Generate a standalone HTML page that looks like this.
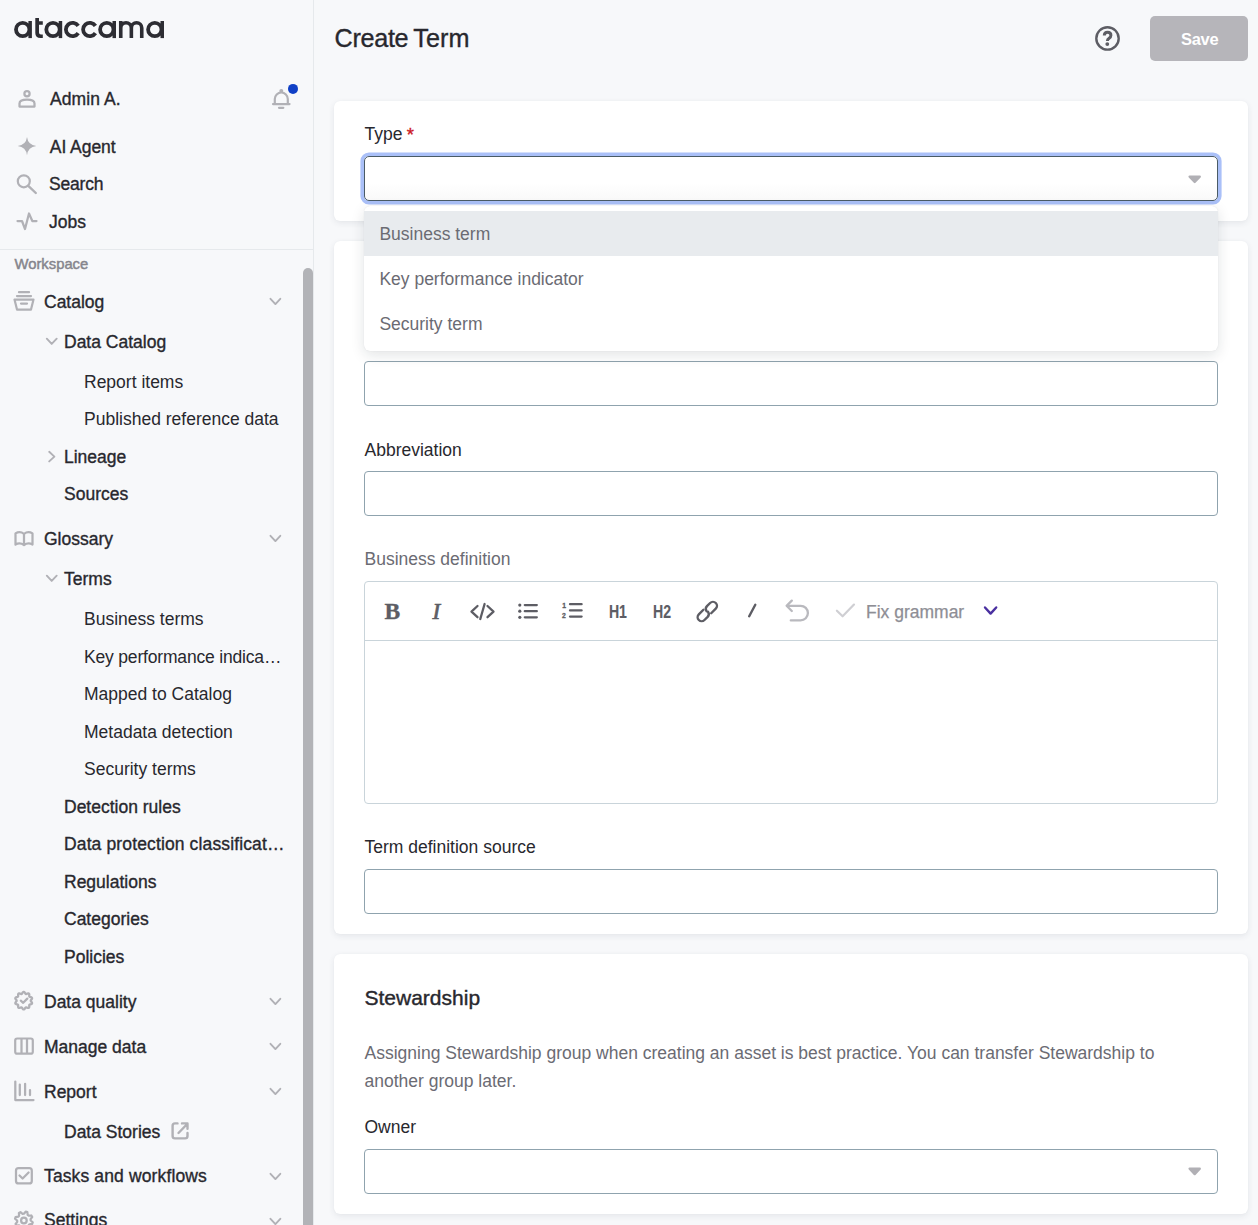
<!DOCTYPE html>
<html><head><meta charset="utf-8"><title>Create Term</title>
<style>
html,body{margin:0;padding:0;}
body{width:1258px;height:1225px;overflow:hidden;position:relative;background:#f7f8fa;font-family:"Liberation Sans",sans-serif;}
.t{position:absolute;white-space:nowrap;}
</style></head><body>
<div style="position:absolute;left:313px;top:0px;width:1px;height:1225px;background:#e6e9ec"></div>
<div style="position:absolute;left:0px;top:249px;width:313px;height:1px;background:#e6e9ec"></div>
<div style="position:absolute;left:303px;top:268px;width:10px;height:1000px;background:#b2b3b7;border-radius:5px"></div>
<svg style="position:absolute;left:0px;top:0px" width="200" height="60" viewBox="0 0 200 60" fill="none"><circle cx="22.70" cy="29.5" r="6.7" stroke="#2d2d33" stroke-width="3.8"/><rect x="28.40" y="21" width="3.5" height="17.1" fill="#2d2d33"/><path d="M35.3,18 H39 V21.2 H42.8 V24.8 H39 V32.6 Q39,34.5 41,34.5 H42.8 V38.1 H40.6 Q35.3,38.1 35.3,33 Z" fill="#2d2d33"/><circle cx="53.00" cy="29.5" r="6.7" stroke="#2d2d33" stroke-width="3.8"/><rect x="58.70" y="21" width="3.5" height="17.1" fill="#2d2d33"/><path d="M78.22,25.85 A6.70,6.70 0 1 0 78.22,33.15" stroke="#2d2d33" stroke-width="3.8"/><path d="M95.42,25.85 A6.70,6.70 0 1 0 95.42,33.15" stroke="#2d2d33" stroke-width="3.8"/><circle cx="106.80" cy="29.5" r="6.7" stroke="#2d2d33" stroke-width="3.8"/><rect x="112.50" y="21" width="3.5" height="17.1" fill="#2d2d33"/><path d="M120.75,21 V38.1 M120.75,28 A5.3,5.3 0 0 1 131.35,28 V38.1 M131.35,28 A5.2,5.2 0 0 1 141.75,28 V38.1" stroke="#2d2d33" stroke-width="3.6"/><circle cx="154.80" cy="29.5" r="6.7" stroke="#2d2d33" stroke-width="3.8"/><rect x="160.50" y="21" width="3.5" height="17.1" fill="#2d2d33"/></svg>
<svg style="position:absolute;left:0px;top:0px" width="313" height="1225" viewBox="0 0 313 1225" fill="none"><circle cx="27" cy="93.7" r="2.6" stroke="#b1b1b6" stroke-width="2.25"/><path d="M19.5,106.5 V103.5 Q19.5,99.6 27,99.6 Q34.5,99.6 34.5,103.5 V106.5 Z" stroke="#b1b1b6" stroke-width="2.25" stroke-linejoin="round"/><path d="M274.8,104 V99 A6.5,6.5 0 0 1 287.8,99 V104" stroke="#b1b1b6" stroke-width="2.2"/><path d="M273,104 H289.5" stroke="#b1b1b6" stroke-width="2.25" stroke-linecap="round"/><circle cx="281.3" cy="91" r="2" fill="#b1b1b6"/><path d="M279,107.8 H283.3" stroke="#b1b1b6" stroke-width="2.25" stroke-linecap="round"/><circle cx="293" cy="88.9" r="5" fill="#1040c6"/><path d="M27,137 Q28,145 36.3,146 Q28,147 27,155.2 Q26,147 17.7,146 Q26,145 27,137 Z" fill="#b1b1b6"/><circle cx="23.8" cy="181.3" r="6" stroke="#b1b1b6" stroke-width="2.2"/><path d="M28.3,185.8 L35.8,193" stroke="#b1b1b6" stroke-width="2.4" stroke-linecap="round"/><path d="M17.5,221 H22 L25,229 L29,213.5 L32.3,221 H36.5" stroke="#b1b1b6" stroke-width="2.25" stroke-linejoin="round" stroke-linecap="round"/><path d="M19,292.2 H29 M17,296 H31" stroke="#b1b1b6" stroke-width="2.25" stroke-linecap="round"/><path d="M14.5,299.6 H33.5 L31,309.6 H17 Z" stroke="#b1b1b6" stroke-width="2.2" stroke-linejoin="round"/><path d="M21,303.5 H27" stroke="#b1b1b6" stroke-width="2.25" stroke-linecap="round"/><path d="M15.5,533.5 Q19.7,530.8 24,533.8 Q28.3,530.8 32.5,533.5 V544.6 Q28.3,542 24,545 Q19.7,542 15.5,544.6 Z M24,533.8 V545" stroke="#b1b1b6" stroke-width="2.25" stroke-linejoin="round"/><path d="M23.70,991.95 L23.97,992.00 L24.24,992.13 L24.49,992.34 L24.72,992.60 L24.94,992.90 L25.13,993.20 L25.31,993.48 L25.49,993.71 L25.68,993.89 L25.88,994.00 L26.10,994.03 L26.36,993.99 L26.64,993.91 L26.95,993.79 L27.29,993.66 L27.63,993.55 L27.98,993.47 L28.30,993.45 L28.59,993.50 L28.84,993.62 L29.04,993.82 L29.17,994.08 L29.25,994.40 L29.29,994.75 L29.29,995.11 L29.27,995.47 L29.25,995.81 L29.26,996.10 L29.30,996.35 L29.40,996.56 L29.57,996.71 L29.79,996.84 L30.07,996.93 L30.39,997.02 L30.74,997.11 L31.09,997.22 L31.41,997.36 L31.68,997.54 L31.89,997.75 L32.02,998.00 L32.06,998.27 L32.02,998.56 L31.90,998.87 L31.72,999.17 L31.50,999.46 L31.28,999.74 L31.07,1000.00 L30.90,1000.25 L30.79,1000.48 L30.75,1000.70 L30.79,1000.92 L30.90,1001.15 L31.07,1001.40 L31.28,1001.66 L31.50,1001.94 L31.72,1002.23 L31.90,1002.53 L32.02,1002.84 L32.06,1003.13 L32.02,1003.40 L31.89,1003.65 L31.68,1003.86 L31.41,1004.04 L31.09,1004.18 L30.74,1004.29 L30.39,1004.38 L30.07,1004.47 L29.79,1004.56 L29.57,1004.69 L29.40,1004.84 L29.30,1005.05 L29.26,1005.30 L29.25,1005.59 L29.27,1005.93 L29.29,1006.29 L29.29,1006.65 L29.25,1007.00 L29.17,1007.32 L29.04,1007.58 L28.84,1007.78 L28.59,1007.90 L28.30,1007.95 L27.98,1007.93 L27.63,1007.85 L27.29,1007.74 L26.95,1007.61 L26.64,1007.49 L26.36,1007.41 L26.10,1007.37 L25.88,1007.40 L25.68,1007.51 L25.49,1007.69 L25.31,1007.92 L25.13,1008.20 L24.94,1008.50 L24.72,1008.80 L24.49,1009.06 L24.24,1009.27 L23.97,1009.40 L23.70,1009.45 L23.43,1009.40 L23.16,1009.27 L22.91,1009.06 L22.68,1008.80 L22.46,1008.50 L22.27,1008.20 L22.09,1007.92 L21.91,1007.69 L21.72,1007.51 L21.52,1007.40 L21.30,1007.37 L21.04,1007.41 L20.76,1007.49 L20.45,1007.61 L20.11,1007.74 L19.77,1007.85 L19.42,1007.93 L19.10,1007.95 L18.81,1007.90 L18.56,1007.78 L18.36,1007.58 L18.23,1007.32 L18.15,1007.00 L18.11,1006.65 L18.11,1006.29 L18.13,1005.93 L18.15,1005.59 L18.14,1005.30 L18.10,1005.05 L18.00,1004.84 L17.83,1004.69 L17.61,1004.56 L17.33,1004.47 L17.01,1004.38 L16.66,1004.29 L16.31,1004.18 L15.99,1004.04 L15.72,1003.86 L15.51,1003.65 L15.38,1003.40 L15.34,1003.13 L15.38,1002.84 L15.50,1002.53 L15.68,1002.23 L15.90,1001.94 L16.12,1001.66 L16.33,1001.40 L16.50,1001.15 L16.61,1000.92 L16.65,1000.70 L16.61,1000.48 L16.50,1000.25 L16.33,1000.00 L16.12,999.74 L15.90,999.46 L15.68,999.17 L15.50,998.87 L15.38,998.56 L15.34,998.27 L15.38,998.00 L15.51,997.75 L15.72,997.54 L15.99,997.36 L16.31,997.22 L16.66,997.11 L17.01,997.02 L17.33,996.93 L17.61,996.84 L17.83,996.71 L18.00,996.56 L18.10,996.35 L18.14,996.10 L18.15,995.81 L18.13,995.47 L18.11,995.11 L18.11,994.75 L18.15,994.40 L18.23,994.08 L18.36,993.82 L18.56,993.62 L18.81,993.50 L19.10,993.45 L19.42,993.47 L19.77,993.55 L20.11,993.66 L20.45,993.79 L20.76,993.91 L21.04,993.99 L21.30,994.03 L21.52,994.00 L21.72,993.89 L21.91,993.71 L22.09,993.48 L22.27,993.20 L22.46,992.90 L22.68,992.60 L22.91,992.34 L23.16,992.13 L23.43,992.00 Z" stroke="#b1b1b6" stroke-width="2.3" stroke-linejoin="round"/><path d="M20.8,1000.7 L23.2,1002.8 L27.3,998.6" stroke="#b1b1b6" stroke-width="2.25" stroke-linecap="round" stroke-linejoin="round"/><rect x="15.2" y="1038.5" width="17.6" height="15.2" rx="2" stroke="#b1b1b6" stroke-width="2.2"/><path d="M21.5,1038.5 V1053.7 M27,1038.5 V1053.7" stroke="#b1b1b6" stroke-width="2.25"/><path d="M15.3,1081.5 V1100 H33.5" stroke="#b1b1b6" stroke-width="2.25" stroke-linecap="round" stroke-linejoin="round"/><path d="M19.8,1084.5 V1095 M25.1,1083.8 V1095 M30,1090 V1095" stroke="#b1b1b6" stroke-width="2.25" stroke-linecap="round"/><rect x="16" y="1168.2" width="15.8" height="15.2" rx="2.5" stroke="#b1b1b6" stroke-width="2.25"/><path d="M19.5,1175.5 L22.6,1178.5 L28.6,1172.5" stroke="#b1b1b6" stroke-width="2.25" stroke-linecap="round" stroke-linejoin="round"/><path d="M32.73,1222.26 L32.21,1223.94 L29.55,1224.28 L28.71,1225.31 L28.90,1227.98 L27.34,1228.81 L25.23,1227.17 L23.90,1227.30 L22.14,1229.33 L20.46,1228.81 L20.12,1226.15 L19.09,1225.31 L16.42,1225.50 L15.59,1223.94 L17.23,1221.83 L17.10,1220.50 L15.07,1218.74 L15.59,1217.06 L18.25,1216.72 L19.09,1215.69 L18.90,1213.02 L20.46,1212.19 L22.57,1213.83 L23.90,1213.70 L25.66,1211.67 L27.34,1212.19 L27.68,1214.85 L28.71,1215.69 L31.38,1215.50 L32.21,1217.06 L30.57,1219.17 L30.70,1220.50 Z" stroke="#b1b1b6" stroke-width="2.25" stroke-linejoin="round"/><circle cx="23.9" cy="1220.5" r="2.8" stroke="#b1b1b6" stroke-width="2.25"/><path d="M177.5,1123.4 H175 Q172.6,1123.4 172.6,1125.8 V1136 Q172.6,1138.4 175,1138.4 H185.1 Q187.5,1138.4 187.5,1136 V1133" stroke="#b1b1b6" stroke-width="2.4" stroke-linecap="round"/><path d="M178.5,1133 L187.2,1124 M182,1123.4 H187.5 V1128.8" stroke="#b1b1b6" stroke-width="2.4" stroke-linecap="round" stroke-linejoin="round"/><path d="M270.5,298.8 L275.4,304.1 L280.3,298.8" stroke="#b1b1b6" stroke-width="1.9" stroke-linecap="round" stroke-linejoin="round"/><path d="M270.5,535.8 L275.4,541.1 L280.3,535.8" stroke="#b1b1b6" stroke-width="1.9" stroke-linecap="round" stroke-linejoin="round"/><path d="M270.5,998.8 L275.4,1004.1 L280.3,998.8" stroke="#b1b1b6" stroke-width="1.9" stroke-linecap="round" stroke-linejoin="round"/><path d="M270.5,1043.8 L275.4,1049.1 L280.3,1043.8" stroke="#b1b1b6" stroke-width="1.9" stroke-linecap="round" stroke-linejoin="round"/><path d="M270.5,1088.8 L275.4,1094.1 L280.3,1088.8" stroke="#b1b1b6" stroke-width="1.9" stroke-linecap="round" stroke-linejoin="round"/><path d="M270.5,1173.8 L275.4,1179.1 L280.3,1173.8" stroke="#b1b1b6" stroke-width="1.9" stroke-linecap="round" stroke-linejoin="round"/><path d="M270.5,1218.8 L275.4,1224.1 L280.3,1218.8" stroke="#b1b1b6" stroke-width="1.9" stroke-linecap="round" stroke-linejoin="round"/><path d="M46.8,338.7 L51.7,343.9 L56.7,338.7" stroke="#b1b1b6" stroke-width="1.9" stroke-linecap="round" stroke-linejoin="round"/><path d="M46.8,575.7 L51.7,580.9 L56.7,575.7" stroke="#b1b1b6" stroke-width="1.9" stroke-linecap="round" stroke-linejoin="round"/><path d="M49.2,451.8 L54.4,456.6 L49.2,461.4" stroke="#b1b1b6" stroke-width="1.9" stroke-linecap="round" stroke-linejoin="round"/></svg>
<div class="t" style="left:50.00px;top:89.04px;font-size:17.5px;line-height:21px;color:#28282e;font-weight:400;-webkit-text-stroke:0.35px #28282e;letter-spacing:0.1px;">Admin A.</div>
<div class="t" style="left:49.80px;top:136.74px;font-size:17.5px;line-height:21px;color:#28282e;font-weight:400;-webkit-text-stroke:0.35px #28282e;letter-spacing:-0.05px;">AI Agent</div>
<div class="t" style="left:49.00px;top:173.64px;font-size:17.5px;line-height:21px;color:#28282e;font-weight:400;-webkit-text-stroke:0.35px #28282e;letter-spacing:-0.2px;">Search</div>
<div class="t" style="left:49.00px;top:211.74px;font-size:17.5px;line-height:21px;color:#28282e;font-weight:400;-webkit-text-stroke:0.35px #28282e;">Jobs</div>
<div class="t" style="left:14.50px;top:255.07px;font-size:14.8px;line-height:18px;color:#85858c;font-weight:400;-webkit-text-stroke:0.35px #85858c;-webkit-text-stroke:0.45px #85858c;">Workspace</div>
<div class="t" style="left:44.00px;top:292.44px;font-size:17.5px;line-height:21px;color:#28282e;font-weight:400;-webkit-text-stroke:0.35px #28282e;">Catalog</div>
<div class="t" style="left:64.00px;top:332.34px;font-size:17.5px;line-height:21px;color:#28282e;font-weight:400;-webkit-text-stroke:0.35px #28282e;">Data Catalog</div>
<div class="t" style="left:84.00px;top:371.84px;font-size:17.5px;line-height:21px;color:#28282e;font-weight:400;">Report items</div>
<div class="t" style="left:84.00px;top:408.74px;font-size:17.5px;line-height:21px;color:#28282e;font-weight:400;">Published reference data</div>
<div class="t" style="left:64.00px;top:446.84px;font-size:17.5px;line-height:21px;color:#28282e;font-weight:400;-webkit-text-stroke:0.35px #28282e;">Lineage</div>
<div class="t" style="left:64.00px;top:483.74px;font-size:17.5px;line-height:21px;color:#28282e;font-weight:400;-webkit-text-stroke:0.35px #28282e;">Sources</div>
<div class="t" style="left:44.00px;top:528.64px;font-size:17.5px;line-height:21px;color:#28282e;font-weight:400;-webkit-text-stroke:0.35px #28282e;">Glossary</div>
<div class="t" style="left:64.00px;top:569.24px;font-size:17.5px;line-height:21px;color:#28282e;font-weight:400;-webkit-text-stroke:0.35px #28282e;">Terms</div>
<div class="t" style="left:84.00px;top:608.74px;font-size:17.5px;line-height:21px;color:#28282e;font-weight:400;">Business terms</div>
<div class="t" style="left:84.00px;top:646.94px;font-size:17.5px;line-height:21px;color:#28282e;font-weight:400;letter-spacing:-0.18px;">Key performance indica…</div>
<div class="t" style="left:84.00px;top:683.84px;font-size:17.5px;line-height:21px;color:#28282e;font-weight:400;">Mapped to Catalog</div>
<div class="t" style="left:84.00px;top:721.94px;font-size:17.5px;line-height:21px;color:#28282e;font-weight:400;">Metadata detection</div>
<div class="t" style="left:84.00px;top:758.84px;font-size:17.5px;line-height:21px;color:#28282e;font-weight:400;">Security terms</div>
<div class="t" style="left:64.00px;top:796.84px;font-size:17.5px;line-height:21px;color:#28282e;font-weight:400;-webkit-text-stroke:0.35px #28282e;">Detection rules</div>
<div class="t" style="left:64.00px;top:834.24px;font-size:17.5px;line-height:21px;color:#28282e;font-weight:400;-webkit-text-stroke:0.35px #28282e;letter-spacing:0.13px;">Data protection classificat…</div>
<div class="t" style="left:64.00px;top:872.34px;font-size:17.5px;line-height:21px;color:#28282e;font-weight:400;-webkit-text-stroke:0.35px #28282e;">Regulations</div>
<div class="t" style="left:64.00px;top:909.24px;font-size:17.5px;line-height:21px;color:#28282e;font-weight:400;-webkit-text-stroke:0.35px #28282e;">Categories</div>
<div class="t" style="left:64.00px;top:946.94px;font-size:17.5px;line-height:21px;color:#28282e;font-weight:400;-webkit-text-stroke:0.35px #28282e;">Policies</div>
<div class="t" style="left:44.00px;top:991.94px;font-size:17.5px;line-height:21px;color:#28282e;font-weight:400;-webkit-text-stroke:0.35px #28282e;">Data quality</div>
<div class="t" style="left:44.00px;top:1037.04px;font-size:17.5px;line-height:21px;color:#28282e;font-weight:400;-webkit-text-stroke:0.35px #28282e;">Manage data</div>
<div class="t" style="left:44.00px;top:1081.84px;font-size:17.5px;line-height:21px;color:#28282e;font-weight:400;-webkit-text-stroke:0.35px #28282e;">Report</div>
<div class="t" style="left:64.00px;top:1121.84px;font-size:17.5px;line-height:21px;color:#28282e;font-weight:400;-webkit-text-stroke:0.35px #28282e;">Data Stories</div>
<div class="t" style="left:44.00px;top:1166.24px;font-size:17.5px;line-height:21px;color:#28282e;font-weight:400;-webkit-text-stroke:0.35px #28282e;letter-spacing:0.13px;">Tasks and workflows</div>
<div class="t" style="left:44.00px;top:1210.24px;font-size:17.5px;line-height:21px;color:#28282e;font-weight:400;-webkit-text-stroke:0.35px #28282e;">Settings</div>
<div class="t" style="left:334.50px;top:23.07px;font-size:25.2px;line-height:30px;color:#28282e;font-weight:400;-webkit-text-stroke:0.35px #28282e;letter-spacing:-0.3px;-webkit-text-stroke:0.35px #28282e;">Create</div>
<div class="t" style="left:413.20px;top:23.07px;font-size:25.2px;line-height:30px;color:#28282e;font-weight:400;-webkit-text-stroke:0.35px #28282e;letter-spacing:0.1px;-webkit-text-stroke:0.35px #28282e;">Term</div>
<svg style="position:absolute;left:1080px;top:10px" width="50" height="60" viewBox="1080 10 50 60" fill="none"><circle cx="1107.5" cy="38.4" r="11.2" stroke="#5d5d64" stroke-width="2.4"/><path d="M1104.3,35.6 Q1104.3,32.3 1107.6,32.3 Q1110.9,32.3 1110.9,35.3 Q1110.9,37.3 1109,38.4 Q1107.4,39.3 1107.4,41" stroke="#5d5d64" stroke-width="3"/><circle cx="1107.3" cy="44.1" r="1.9" fill="#5d5d64"/></svg>
<div style="position:absolute;left:1150px;top:16px;width:98px;height:45px;background:#b6b5ba;border-radius:5px"></div>
<div class="t" style="left:1181.00px;top:28.98px;font-size:16.5px;line-height:20px;color:#ffffff;font-weight:700;letter-spacing:-0.3px;">Save</div>
<div style="position:absolute;left:334px;top:101px;width:914px;height:120px;background:#fff;border-radius:6px;box-shadow:0 2px 6px rgba(40,60,80,0.09), 0 0 1px rgba(40,60,80,0.06)"></div>
<div style="position:absolute;left:334px;top:241px;width:914px;height:693px;background:#fff;border-radius:6px;box-shadow:0 2px 6px rgba(40,60,80,0.09), 0 0 1px rgba(40,60,80,0.06)"></div>
<div style="position:absolute;left:334px;top:954px;width:914px;height:260px;background:#fff;border-radius:6px;box-shadow:0 2px 6px rgba(40,60,80,0.09), 0 0 1px rgba(40,60,80,0.06)"></div>
<div class="t" style="left:364.50px;top:124.04px;font-size:17.5px;line-height:21px;color:#28282e;font-weight:400;">Type</div>
<div class="t" style="left:406.80px;top:123.89px;font-size:18.5px;line-height:22px;color:#cc1a26;font-weight:400;-webkit-text-stroke:0.35px #cc1a26;">*</div>
<div style="position:absolute;left:364px;top:361px;width:854px;height:45px;box-sizing:border-box;border:1px solid #8fa3ae;border-radius:4px;background:#fff"></div>
<div style="position:absolute;left:364px;top:471px;width:854px;height:45px;box-sizing:border-box;border:1px solid #8fa3ae;border-radius:4px;background:#fff"></div>
<div style="position:absolute;left:364px;top:869px;width:854px;height:45px;box-sizing:border-box;border:1px solid #8fa3ae;border-radius:4px;background:#fff"></div>
<div style="position:absolute;left:364px;top:1149px;width:854px;height:45px;box-sizing:border-box;border:1px solid #8fa3ae;border-radius:4px;background:#fff"></div>
<div style="position:absolute;left:364px;top:581px;width:854px;height:223px;box-sizing:border-box;border:1px solid #c9d4da;border-radius:4px;background:#fff"></div>
<div style="position:absolute;left:365px;top:640px;width:852px;height:1px;background:#c9d4da"></div>
<div class="t" style="left:364.50px;top:439.54px;font-size:17.5px;line-height:21px;color:#28282e;font-weight:400;">Abbreviation</div>
<div class="t" style="left:364.50px;top:549.24px;font-size:17.5px;line-height:21px;color:#6b6b73;font-weight:400;">Business definition</div>
<div class="t" style="left:364.50px;top:836.84px;font-size:17.5px;line-height:21px;color:#28282e;font-weight:400;">Term definition source</div>
<div class="t" style="left:364.50px;top:985.42px;font-size:21px;line-height:25px;color:#28282e;font-weight:400;-webkit-text-stroke:0.35px #28282e;-webkit-text-stroke:0.4px #28282e;">Stewardship</div>
<div class="t" style="left:364.50px;top:1043.44px;font-size:17.5px;line-height:21px;color:#6b6b73;font-weight:400;">Assigning Stewardship group when creating an asset is best practice. You can transfer Stewardship to</div>
<div class="t" style="left:364.50px;top:1071.34px;font-size:17.5px;line-height:21px;color:#6b6b73;font-weight:400;">another group later.</div>
<div class="t" style="left:364.50px;top:1117.14px;font-size:17.5px;line-height:21px;color:#28282e;font-weight:400;">Owner</div>
<svg style="position:absolute;left:364px;top:585px" width="660" height="50" viewBox="364 585 660 50" fill="none"><text x="384.6" y="619.4" font-family="Liberation Serif" font-weight="700" font-size="23.6" fill="#5d5d64" stroke="#5d5d64" stroke-width="0.3">B</text><text x="432.6" y="619.4" font-family="Liberation Serif" font-weight="400" font-style="italic" font-size="23" fill="#5d5d64" stroke="#5d5d64" stroke-width="0.7">I</text><path d="M477.5,606 L471.5,611.6 L477.5,617.2 M487.5,606 L493.5,611.6 L487.5,617.2 M484.6,604 L480.3,619" stroke="#5d5d64" stroke-width="2.3" stroke-linecap="round" stroke-linejoin="round"/><circle cx="519.8" cy="605.1" r="1.6" fill="#5d5d64"/><path d="M524.8,605.1 H536.8" stroke="#5d5d64" stroke-width="2.3" stroke-linecap="round"/><circle cx="519.8" cy="611.2" r="1.6" fill="#5d5d64"/><path d="M524.8,611.2 H536.8" stroke="#5d5d64" stroke-width="2.3" stroke-linecap="round"/><circle cx="519.8" cy="617.3" r="1.6" fill="#5d5d64"/><path d="M524.8,617.3 H536.8" stroke="#5d5d64" stroke-width="2.3" stroke-linecap="round"/><path d="M570,604.2 H581.6" stroke="#5d5d64" stroke-width="2.3" stroke-linecap="round"/><path d="M570,610.4 H581.6" stroke="#5d5d64" stroke-width="2.3" stroke-linecap="round"/><path d="M570,616.6 H581.6" stroke="#5d5d64" stroke-width="2.3" stroke-linecap="round"/><text x="562.2" y="608" font-family="Liberation Sans" font-weight="700" font-size="6.8" fill="#5d5d64" stroke="#5d5d64" stroke-width="0.3">1</text><text x="562" y="617.6" font-family="Liberation Sans" font-weight="700" font-size="6.8" fill="#5d5d64" stroke="#5d5d64" stroke-width="0.3">2</text><text x="0" y="0" transform="translate(608.9,618.1) scale(0.76,1)" font-family="Liberation Sans" font-weight="700" font-size="18.6" fill="#5d5d64" stroke="#5d5d64" stroke-width="0.15">H1</text><text x="0" y="0" transform="translate(653,618.1) scale(0.76,1)" font-family="Liberation Sans" font-weight="700" font-size="18.6" fill="#5d5d64" stroke="#5d5d64" stroke-width="0.15">H2</text><g transform="translate(707.3,611.5) rotate(-45)"><path d="M-1.5,-4 H-8 A4,4 0 0 0 -8,4 H-3.5 A4,4 0 0 0 0.3,0.8" stroke="#5d5d64" stroke-width="2.4" stroke-linecap="round"/><path d="M1.5,4 H8 A4,4 0 0 0 8,-4 H3.5 A4,4 0 0 0 -0.3,-0.8" stroke="#5d5d64" stroke-width="2.4" stroke-linecap="round"/></g><path d="M755.3,604.8 L749.2,616.3" stroke="#5d5d64" stroke-width="2.4" stroke-linecap="round"/><path d="M791.8,600.6 L786.6,605.8 L791.8,611 M787,605.8 H800.6 A7.3,7.3 0 0 1 800.6,620.4 H790.8" stroke="#b9b9be" stroke-width="2.3" stroke-linecap="round" stroke-linejoin="round"/><path d="M836.9,610.7 L842.6,616.3 L854,604.6" stroke="#cfcfd3" stroke-width="2.2" stroke-linecap="round" stroke-linejoin="round"/><path d="M985,607.5 L990.6,613.6 L996.2,607.5" stroke="#4a30a0" stroke-width="2.4" stroke-linecap="round" stroke-linejoin="round"/></svg>
<div class="t" style="left:866.00px;top:601.54px;font-size:17.5px;line-height:21px;color:#8e8e95;font-weight:400;-webkit-text-stroke:0.35px #8e8e95;-webkit-text-stroke:0.25px #8e8e95;">Fix grammar</div>
<svg style="position:absolute;left:1180px;top:1160px" width="30" height="25" viewBox="1180 1160 30 25" fill="none"><path d="M1189.6,1168.7 H1199.8 L1194.7,1174.1 Z" fill="#b1b0b5" stroke="#b1b0b5" stroke-width="2.3" stroke-linejoin="round"/></svg>
<div style="position:absolute;left:364px;top:156px;width:854px;height:45px;box-sizing:border-box;border:1.3px solid #4a5b66;border-radius:5px;background:linear-gradient(#fff 60%,#f9f9f9);box-shadow:0 0 0 3.6px #aac0f8"></div>
<svg style="position:absolute;left:1180px;top:165px" width="30" height="25" viewBox="1180 165 30 25" fill="none"><path d="M1189.6,176.6 H1199.8 L1194.7,182 Z" fill="#b1b0b5" stroke="#b1b0b5" stroke-width="2.3" stroke-linejoin="round"/></svg>
<div style="position:absolute;left:364px;top:206px;width:854px;height:145px;background:#fff;border-radius:6px;box-shadow:0 4px 14px rgba(20,30,40,0.12), 0 0 1px rgba(0,0,0,0.12)"></div>
<div style="position:absolute;left:364px;top:211px;width:854px;height:45px;background:#e8ebee"></div>
<div class="t" style="left:379.40px;top:224.04px;font-size:17.5px;line-height:21px;color:#6b6b73;font-weight:400;">Business term</div>
<div class="t" style="left:379.40px;top:269.04px;font-size:17.5px;line-height:21px;color:#6b6b73;font-weight:400;">Key performance indicator</div>
<div class="t" style="left:379.40px;top:314.04px;font-size:17.5px;line-height:21px;color:#6b6b73;font-weight:400;">Security term</div>
</body></html>
